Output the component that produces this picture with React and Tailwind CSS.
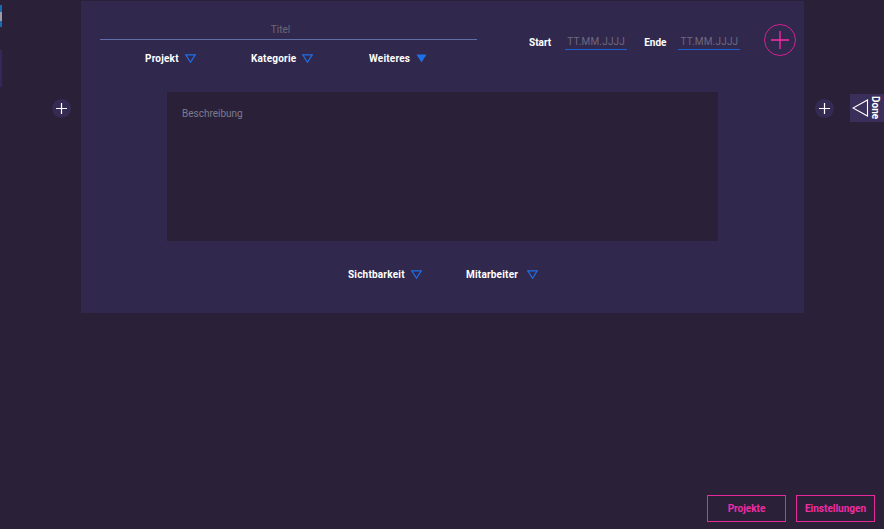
import React from "react";

const TriOutline = () => (
  <svg width="11" height="9" viewBox="0 0 11 9" className="shrink-0">
    <path d="M0.8 0.8 L10.2 0.8 L5.5 8.2 Z" fill="none" stroke="#1f6fe8" strokeWidth="1.2" />
  </svg>
);
const TriFilled = () => (
  <svg width="11" height="9" viewBox="0 0 11 9" className="shrink-0">
    <path d="M0.5 0.5 L10.5 0.5 L5.5 8.5 Z" fill="#1f6fe8" />
  </svg>
);

const Drop = ({ label, filled, w, gap = "gap-[6px]" }) => (
  <div className={`flex items-center ${gap} ${w}`}>
    <span className="text-[10px] font-bold text-white tracking-[0.2px]">{label}</span>
    {filled ? <TriFilled /> : <TriOutline />}
  </div>
);

const SmallPlus = () => (
  <div className="w-[19px] h-[19px] rounded-full bg-[#352a52] flex items-center justify-center">
    <svg width="11" height="11" viewBox="0 0 11 11">
      <path d="M5.5 0 V11 M0 5.5 H11" stroke="white" strokeWidth="1.2" />
    </svg>
  </div>
);

export default function App() {
  return (
    <div
      className="w-[884px] h-[529px] bg-[#2a2139] relative overflow-hidden"
      style={{ fontFamily: "Roboto, 'Liberation Sans', sans-serif" }}
    >
      <div className="absolute left-0 top-[5px] w-[2px] h-[22px] bg-[#1a6bb0]" />
      <div className="absolute left-0 top-[12px] w-[2px] h-[9px] bg-[#9a9aa8]" />
      <div className="absolute left-0 top-[50px] w-[2px] h-[37px] bg-[#34285a]" />

      <div className="flex items-start pt-[1px]">
        <div className="w-[81px] flex justify-end pr-[10px] pt-[98px]">
          <SmallPlus />
        </div>
        <div className="w-[723px] h-[312px] bg-[#31284d] flex flex-col">
          <div className="flex items-start">
            <div className="ml-[19px] w-[377px] flex flex-col">
              <div className="h-[39px] border-b border-[#5f6ea8] flex items-end justify-center pb-[1px] pr-[16px]">
                <span className="text-[10px] text-[#6b6878] mb-[1px]">Titel</span>
              </div>
              <div className="flex items-center mt-[11px] pl-[45px]">
                <Drop label="Projekt" w="w-[106px]" />
                <Drop label="Kategorie" w="w-[118px]" />
                <Drop label="Weiteres" filled w="" />
              </div>
            </div>
            <div className="flex items-center ml-[52px] mt-[34px]">
              <span className="text-[10px] font-bold text-white">Start</span>
              <div className="ml-[14px] w-[62px] border-b border-[#1f5fd0] text-center text-[10px] text-[#6e6a7e] leading-[12px] pb-[1px] tracking-[0.2px]">TT.MM.JJJJ</div>
              <span className="ml-[17px] text-[10px] font-bold text-white">Ende</span>
              <div className="ml-[12px] w-[62px] border-b border-[#1f5fd0] text-center text-[10px] text-[#6e6a7e] leading-[12px] pb-[1px] tracking-[0.2px]">TT.MM.JJJJ</div>
            </div>
            <div className="ml-[24px] mt-[23px] w-[32px] h-[32px] rounded-full border border-[#d4208e] flex items-center justify-center">
              <svg width="18" height="18" viewBox="0 0 18 18">
                <path d="M9 0 V18 M0 9 H18" stroke="#ff2aa8" strokeWidth="1.3" />
              </svg>
            </div>
          </div>
          <div className="mt-[26px] ml-[86px] w-[551px] h-[149px] bg-[#2a2139] px-[15px] pt-[8px]">
            <span className="text-[10px] text-[#7d7a8c]">Beschreibung</span>
          </div>
          <div className="flex items-center mt-[26px] ml-[267px]">
            <Drop label="Sichtbarkeit" w="w-[118px]" />
            <Drop label="Mitarbeiter" w="" gap="gap-[9px]" />
          </div>
        </div>
        <div className="pt-[98px] ml-[11px]"><SmallPlus /></div>
        <div className="ml-[16px] mt-[93px] w-[34px] h-[28px] bg-[#3a2e5b] flex items-center">
          <svg width="17" height="18" viewBox="0 0 17 18" className="ml-[2px]">
            <path d="M15.5 1 V17 L1 9 Z" fill="none" stroke="white" strokeWidth="1.1" />
          </svg>
          <span
            className="text-[10px] font-bold text-white ml-[1px] leading-none"
            style={{ writingMode: "vertical-rl" }}
          >
            Done
          </span>
        </div>
      </div>

      <div className="absolute right-[9px] bottom-[7px] flex gap-[10px]">
        <div className="w-[79px] h-[27px] border border-[#e52a9a] flex items-center justify-center text-[10px] font-bold text-[#f02ca3]">Projekte</div>
        <div className="w-[79px] h-[27px] border border-[#e52a9a] flex items-center justify-center text-[10px] font-bold text-[#f02ca3]">Einstellungen</div>
      </div>
    </div>
  );
}
